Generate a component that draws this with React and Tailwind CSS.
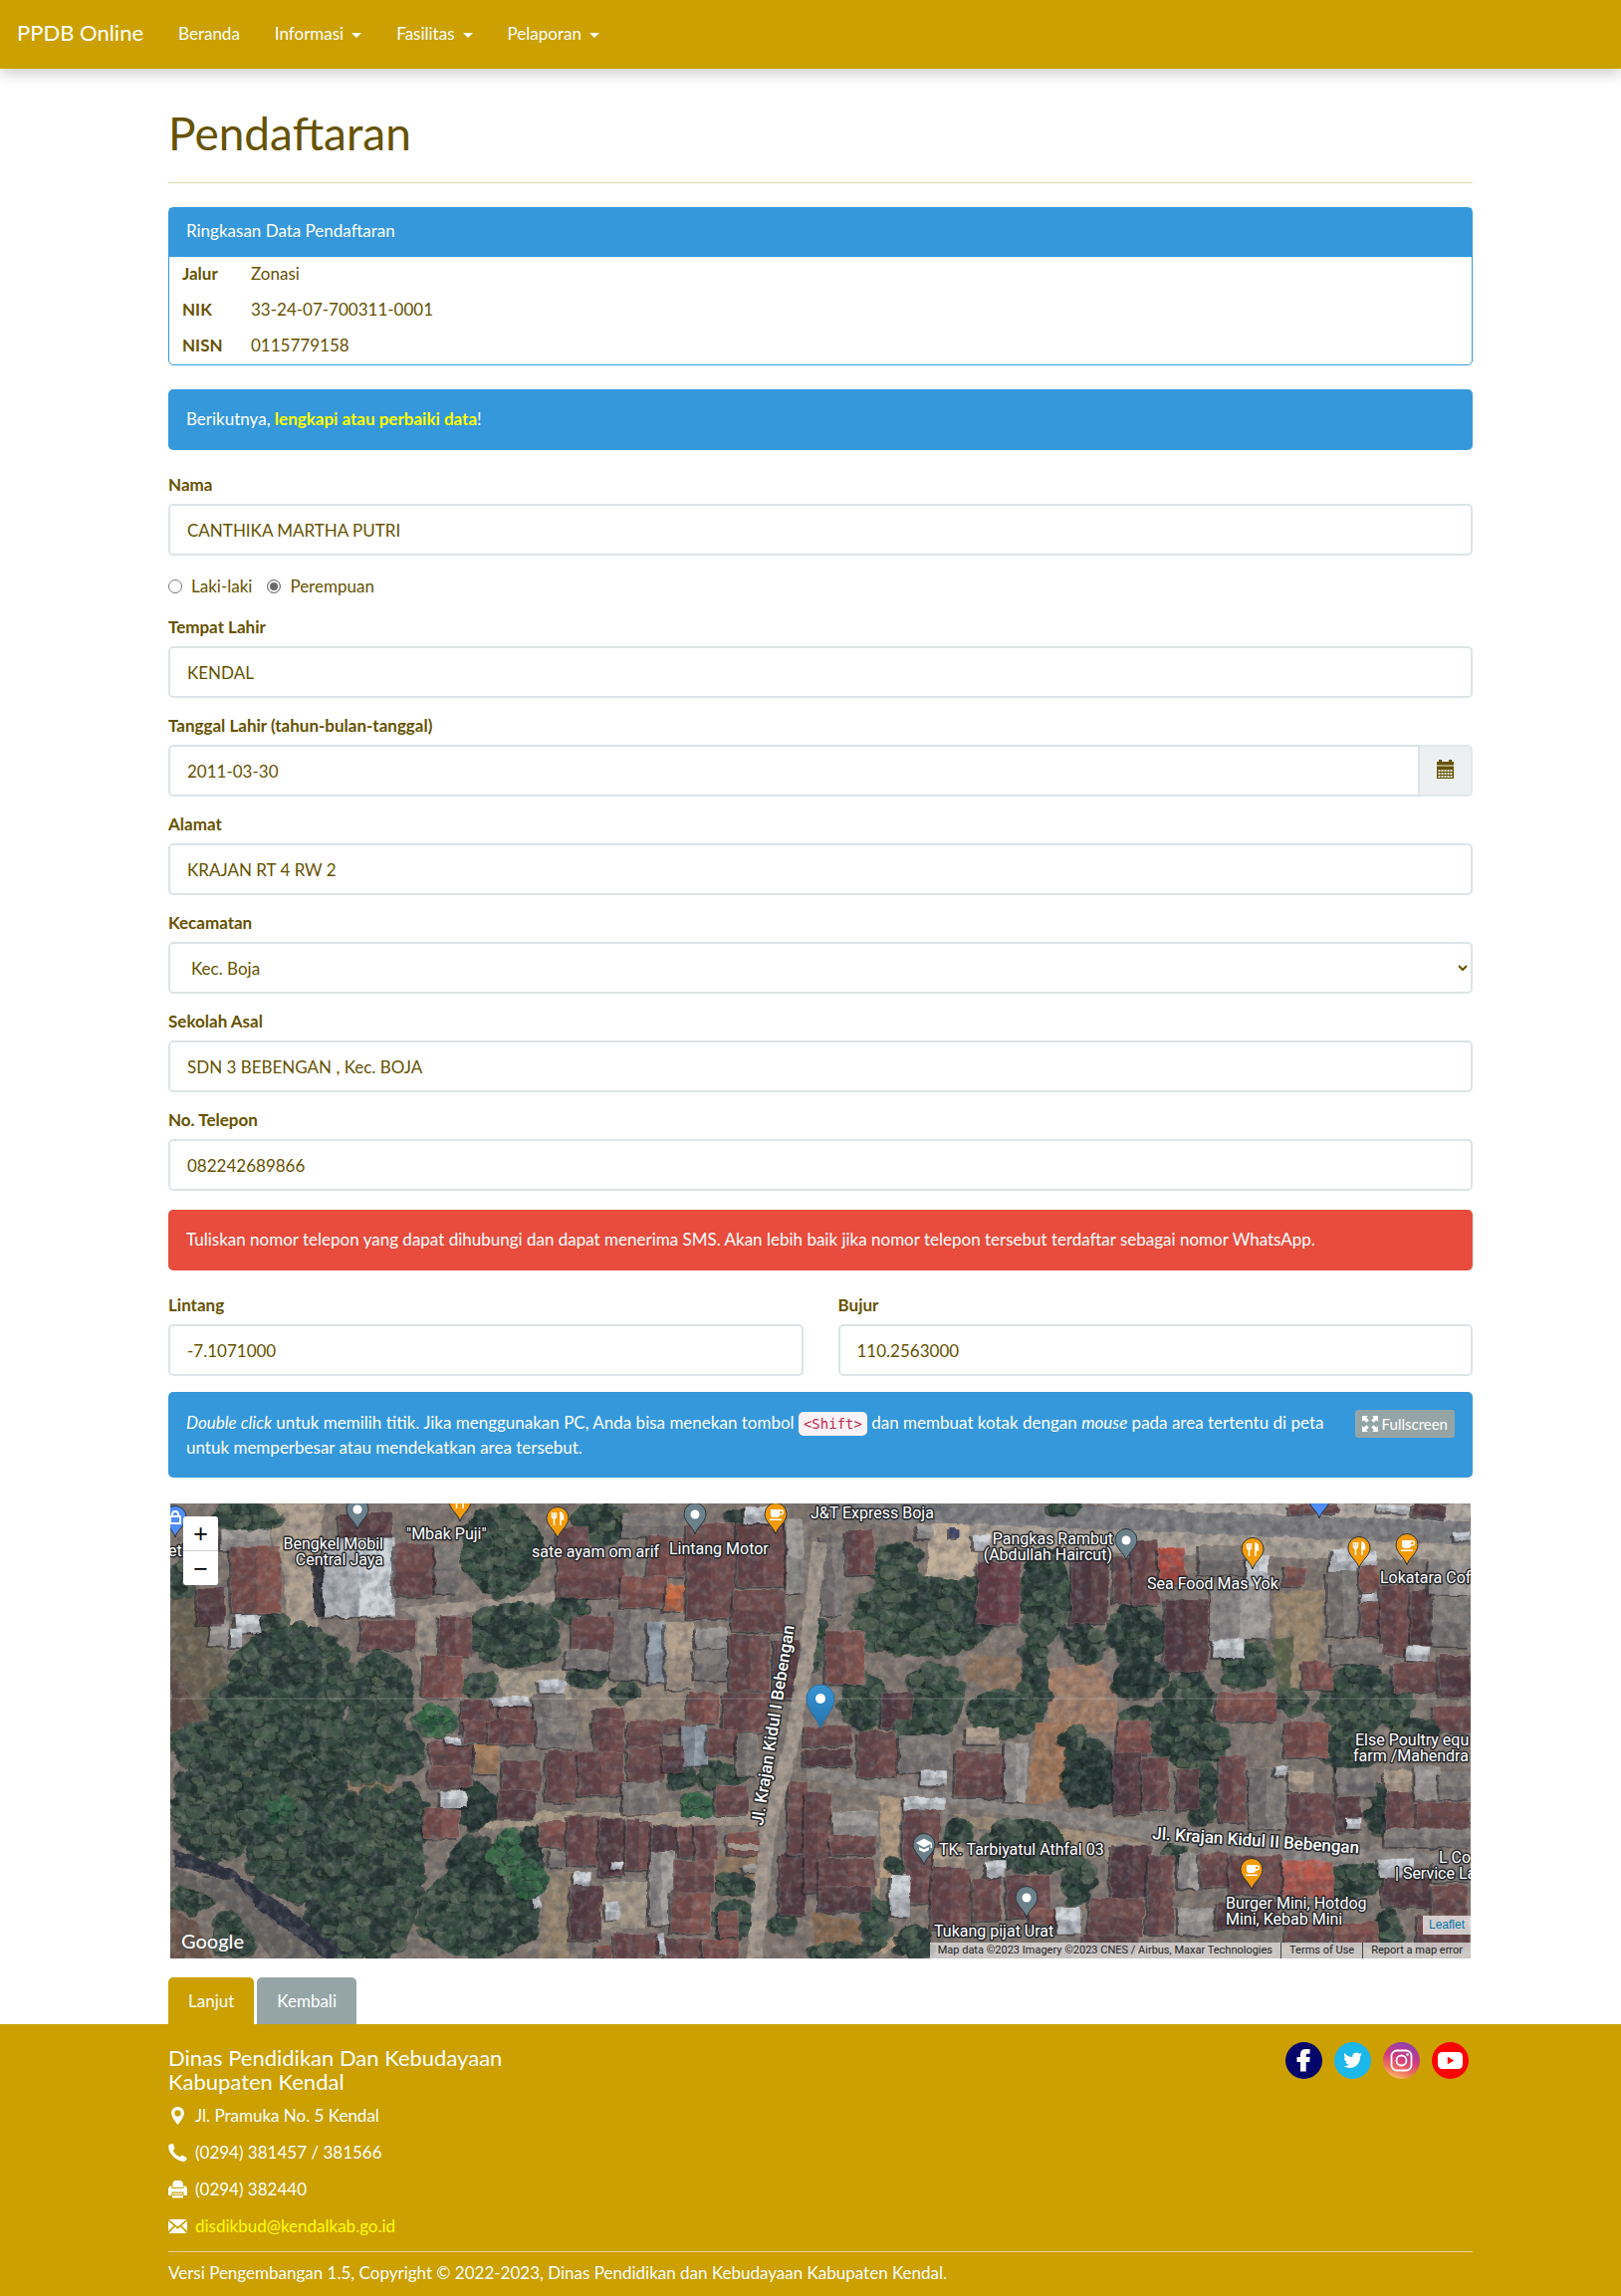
import React from "react";

/* ---------- small icons ---------- */
const CalendarIcon = () => (
  <svg width="17" height="19" viewBox="0 0 17 19" fill="currentColor" aria-hidden="true">
    <path d="M2 0h3v2h7V0h3v2h2v3.500H0V2h2z" />
    <path
      fillRule="evenodd"
      d="M0 6.500h17V19H0zM1.500 10v2h2v-2zM4.500 10v2h2v-2zM7.500 10v2h2v-2zM10.500 10v2h2v-2zM13.500 10v2h2v-2zM1.500 13v2h2v-2zM4.500 13v2h2v-2zM7.500 13v2h2v-2zM10.500 13v2h2v-2zM13.500 13v2h2v-2zM1.500 16v2h2v-2zM4.500 16v2h2v-2zM7.500 16v2h2v-2zM10.500 16v2h2v-2zM13.500 16v2h2v-2z"
    />
  </svg>
);
const ExpandIcon = () => (
  <svg width="16" height="16" viewBox="0 0 16 16" fill="currentColor" aria-hidden="true">
    <path d="M0 0h6L4.200 1.800 6.800 4.400 4.400 6.800 1.800 4.200 0 6zM16 0h-6l1.800 1.800-2.600 2.600 2.400 2.400 2.600-2.600L16 6zM0 16h6l-1.800-1.800 2.600-2.600-2.400-2.400-2.600 2.600L0 10zM16 16h-6l1.800-1.800-2.600-2.600 2.400-2.400 2.600 2.600L16 10z" />
  </svg>
);
const PinIcon = () => (
  <svg width="19" height="18" viewBox="0 0 19 18" fill="currentColor" aria-hidden="true">
    <path fillRule="evenodd" d="M9.500 0a6.400 6.400 0 0 1 6.400 6.400C15.900 10.500 9.500 18 9.500 18S3.100 10.500 3.100 6.400A6.400 6.400 0 0 1 9.500 0zm0 3.200a3.200 3.200 0 1 0 0 6.400 3.200 3.200 0 0 0 0-6.400z" />
  </svg>
);
const PhoneIcon = () => (
  <svg width="19" height="18" viewBox="0 0 19 18" fill="currentColor" aria-hidden="true">
    <path d="M1.500.8 4 0c.6-.1 1 .2 1.200.7l1.200 3.600c.1.500 0 .9-.4 1.200L4.700 6.800c1.200 2.700 3.500 5 6.800 6.500l1.700-1.400c.4-.3.900-.3 1.300-.1l3.700 2.200c.5.300.7.900.4 1.400L17.400 17c-.4.700-1 1-1.700 1C7.500 17.300 0 9.800.2 2.500c0-.8.500-1.400 1.300-1.700z" />
  </svg>
);
const PrinterIcon = () => (
  <svg width="19" height="18" viewBox="0 0 19 18" fill="currentColor" aria-hidden="true">
    <path d="M6.500 0h6l2.500 2.500V7H4.500V2z" />
    <path d="M1.500 5.500h2V8h12V5.500h2L19 8v7h-3.500v-3.500h-12V15H0V8z" />
    <path d="M4.500 12.700h10V14h-10zM4 15h11v2.500H4z" />
  </svg>
);
const MailIcon = () => (
  <svg width="19" height="14" viewBox="0 0 19 14" fill="currentColor" aria-hidden="true">
    <path d="M.6 0h17.800L9.500 7.600zM0 1.400 5.600 6.400 0 11.800zM19 1.400v10.400l-5.600-5.400zM6.700 7.400l2.800 2.300 2.800-2.300L18.600 14H.4z" />
  </svg>
);
const Caret = () => <span className="ml-2 inline-block border-x-[5px] border-t-[5px] border-x-transparent border-t-current align-middle" />;

/* ---------- satellite map ---------- */
const M = "#6f4b4c", D = "#593d42", R = "#83524e", G = "#827c79", L = "#a39e9b", W = "#d0d5da", T = "#b3a08c", B = "#96a2ae";

// Each sector is drawn in its own local units: roofs [x, y, w, h, colour, ridge], trees [x, y, w, h, count, tone]
const sectors = [
  {
    t: "translate(-21 -10) scale(.4209 .3333)",
    ground: [
      ["#6a614f", "50,240 110,280 170,470 190,560 150,720 50,720"],
      ["#5d4a43", "50,500 110,640 140,720 50,720"],
      ["#b0a08e", "300,31 420,31 400,240 400,400 330,410 320,240 290,110"],
      ["#a2968b", "600,345 800,320 1010,290 1010,320 820,350 640,380"],
      ["#2d3038", "385,180 415,210 430,370 395,370"],
      ["#9c8f84", "640,380 700,370 690,500 650,600 640,490"],
      ["#a79b88", "820,540 990,530 1010,620 860,640"],
      ["#938576", "1010,560 1290,590 1280,720 1040,720"],
    ],
    roofs: [
      [455, 60, 125, 100, D], [415, 135, 170, 236, W, "v"], [585, 150, 97, 160, M], [684, 150, 55, 150, G],
      [170, 110, 120, 60, L, "h"], [505, 380, 130, 92, M], [692, 370, 78, 120, M, "v"], [655, 490, 92, 125, R, "v"], [145, 380, 45, 80, L],
      [205, 365, 60, 55, W], [115, 285, 65, 110, D], [195, 160, 120, 200, R, "v"], [975, 100, 75, 90, M, "v"], [975, 190, 160, 125, M],
      [1130, 60, 150, 70, G], [1190, 130, 90, 120, R, "v"], [1125, 250, 110, 95, R], [1232, 275, 46, 80, "#c96a42"],
      [1285, 90, 115, 95, M], [1283, 180, 115, 195, M, "v"], [1403, 90, 118, 190, M, "v"], [1520, 80, 40, 220, L], [1420, 40, 70, 50, W],
      [1395, 290, 125, 125, M], [1100, 350, 94, 212, G, "v"], [1010, 370, 98, 100, M], [995, 470, 100, 60, G],
      [1190, 385, 42, 185, B], [1232, 390, 65, 200, T], [1305, 405, 75, 60, L], [1300, 470, 85, 90, G], [1385, 425, 95, 170, M, "v"], [1285, 600, 75, 95, R, "v"],
      [1370, 600, 110, 120, M, "v"], [745, 622, 90, 98, M, "v"], [835, 640, 85, 80, M], [920, 605, 75, 115, G, "v"], [820, 612, 90, 30, W],
      [930, 560, 62, 40, W], [1065, 645, 70, 75, M, "v"], [1145, 682, 150, 38, M], [195, 405, 26, 60, W], [1490, 440, 60, 180, D],
    ],
    trees: [[150, 31, 160, 85, 20], [745, 40, 195, 270, 55], [770, 330, 210, 195, 50], [190, 400, 300, 330, 90], [470, 480, 160, 240, 50], [960, 300, 85, 80, 12], [1020, 31, 120, 110, 20], [140, 580, 100, 100, 20], [640, 640, 90, 80, 14, 2], [760, 540, 60, 70, 9], [1010, 500, 70, 90, 8], [1110, 570, 55, 55, 6], [50, 210, 60, 100, 8], [265, 350, 60, 50, 6], [1390, 50, 50, 60, 6]],
  },
  {
    t: "translate(639 -10) scale(.4337 .3333)",
    ground: [
      ["#c1ae98", "290,90 400,85 390,290 270,300"],
      ["#aaa095", "380,80 860,110 1538,150 1538,200 900,190 380,160"],
      ["#7e7d80", "40,31 420,31 1538,85 1538,155 760,112 250,85 20,75"],
      ["#b3aaa3", "620,31 1538,31 1538,85 900,55"],
      ["#9a866c", "1080,300 1200,290 1190,480 1150,580 1100,600"],
      ["#a37e68", "560,530 680,510 720,600 720,720 560,720"],
      ["#8d735f", "370,490 500,490 540,560 440,600 370,560"],
      ["#5c6249", "1080,440 1130,430 1120,600 1090,600"],
    ],
    roofs: [
      [35, 125, 55, 240, G, "v"], [92, 110, 65, 135, M, "v"], [255, 90, 40, 45, L], [385, 125, 38, 45, W], [330, 105, 24, 30, "#3c4168"],
      [395, 205, 100, 190, "#6c3f4b", "v"], [45, 415, 90, 160, R, "v"], [615, 180, 85, 210, D, "v"], [712, 190, 40, 140, M, "v"], [755, 140, 60, 195, M, "v"],
      [815, 165, 62, 110, "#b74e42"], [910, 155, 110, 90, G], [1020, 190, 50, 90, W], [935, 280, 138, 160, L, "v"], [940, 440, 75, 55, W], [830, 320, 100, 215, D, "v"],
      [1105, 220, 50, 60, R], [1215, 170, 105, 65, W], [1207, 235, 72, 195, G, "v"], [1282, 220, 42, 75, R], [1283, 300, 42, 25, W], [1283, 330, 45, 100, M],
      [1330, 275, 68, 210, M, "v"], [1400, 290, 45, 170, D], [1440, 200, 98, 105, L, "v"], [1450, 310, 88, 150, G], [1390, 460, 50, 45, W],
      [1360, 510, 100, 90, M], [1465, 485, 73, 130, D], [1450, 640, 88, 80, M], [1150, 505, 70, 85, R, "v"], [1215, 450, 120, 65, G],
      [950, 600, 140, 85, R], [175, 600, 70, 105, D, "v"], [1320, 35, 80, 22, W], [1405, 31, 75, 40, D], [1120, 31, 110, 30, M], [1500, 118, 38, 22, W],
    ],
    trees: [[110, 250, 330, 240, 80], [150, 150, 110, 130, 22], [360, 255, 65, 50, 8], [500, 160, 110, 280, 40], [500, 420, 60, 290, 14], [600, 400, 90, 100, 18], [700, 340, 125, 170, 30], [710, 500, 120, 110, 26, 1], [830, 540, 110, 170, 28], [960, 450, 120, 130, 20], [1190, 520, 170, 200, 44], [1340, 600, 60, 120, 10], [80, 540, 110, 170, 22], [240, 520, 120, 200, 38], [370, 590, 160, 130, 22], [560, 31, 80, 24, 10], [0, 380, 40, 140, 6], [1090, 600, 60, 60, 8], [735, 640, 200, 80, 20]],
  },
  {
    t: "translate(-21 220) scale(.4209 .3333)",
    ground: [
      ["#6b5346", "50,560 110,600 150,710 50,710"],
      ["#94775c", "470,180 590,170 560,240 520,290"],
      ["#a89884", "800,270 1470,270 1470,310 800,320"],
      ["#93826c", "950,450 1010,450 1000,710 930,710"],
      ["#a59886", "1080,480 1200,480 1180,620 1070,620"],
      ["#8f765f", "1350,400 1450,400 1450,480 1350,480"],
    ],
    roofs: [
      [672, 55, 105, 75, M], [668, 130, 100, 65, M], [710, 42, 65, 24, W], [775, 65, 60, 90, "#a8805c"], [695, 205, 62, 50, W], [655, 260, 85, 90, R, "v"],
      [750, -10, 60, 70, M], [812, -10, 108, 75, M, "v"], [925, -10, 95, 85, G], [1062, -10, 72, 105, M, "v"], [1142, 10, 85, 60, M], [1142, 72, 85, 105, M], [1270, 10, 60, 120, B, "v"], [1332, 20, 70, 75, M],
      [1402, 35, 50, 125, G, "v"], [845, 115, 90, 90, M, "v"], [832, 205, 90, 85, D], [948, 85, 75, 155, M, "v"], [1025, 90, 108, 130, M, "v"], [1130, 180, 85, 95, G], [1225, 70, 50, 80, D],
      [1350, 190, 78, 90, M], [930, 300, 65, 75, R], [998, 280, 75, 150, M, "v"], [1075, 290, 60, 170, D, "v"], [1138, 290, 60, 155, M, "v"], [1200, 310, 60, 90, D, "v"], [1262, 310, 40, 95, M], [1303, 310, 52, 105, M, "v"],
      [1378, 330, 78, 70, R], [1252, 415, 95, 95, M], [1195, 390, 55, 220, L, "v"], [1245, 512, 95, 122, R, "v"], [1015, 450, 38, 55, W], [1100, 420, 28, 24, W], [1005, 490, 75, 165, D, "v"],
      [1090, 540, 30, 55, W], [1110, 635, 105, 75, M, "v"], [1230, 650, 90, 60, M, "v"], [1322, 650, 85, 60, R], [1360, 570, 45, 75, R], [1065, 670, 40, 40, R], [1505, 400, 63, 180, D], [1525, 180, 45, 220, M], [955, 385, 35, 50, G],
      [1215, 635, 14, 65, W], [1420, 430, 30, 22, L], [915, 525, 18, 35, W],
    ],
    trees: [[50, -10, 280, 150, 60], [60, 100, 200, 310, 80], [220, 60, 270, 480, 160], [330, -10, 330, 190, 80], [430, 200, 220, 510, 130], [380, 480, 200, 230, 60], [570, 190, 90, 180, 22], [640, 440, 290, 270, 60], [720, 350, 110, 140, 30, 1], [880, 320, 60, 200, 20, 1], [820, 330, 60, 120, 12, 2], [860, 420, 90, 110, 20, 2], [60, 480, 100, 90, 16], [160, 560, 90, 150, 22], [735, 180, 85, 140, 18, 1], [1265, 225, 70, 60, 14, 2], [1240, 130, 60, 70, 8], [1310, 130, 120, 60, 9], [1350, 460, 100, 60, 10], [1345, 530, 100, 120, 10], [1490, 570, 50, 70, 8], [290, 225, 50, 80, 10, 2]],
    over: [
      ["#2b2e3a", "60,385 190,440 330,560 470,700 420,712 290,590 170,470 60,430"],
      ["#67635f", "50,430 130,470 200,470 260,560 400,690 420,712 290,712 210,580 130,520 50,480"],
    ],
  },
  {
    t: "translate(639 220) scale(.4337 .3333)",
    ground: [
      ["#b49b80", "170,220 220,230 210,460 160,470 150,600 240,660 170,700"],
      ["#a07559", "530,0 640,0 630,130 590,230 510,250"],
      ["#a18d74", "330,270 760,350 800,390 650,410 400,320"],
      ["#86684f", "10,570 120,600 130,690 20,690"],
      ["#a39485", "640,340 800,370 790,420 700,420"],
    ],
    roofs: [
      [-5, 10, 110, 60, M], [-5, 80, 110, 50, D], [120, 25, 90, 140, M, "v"], [215, 40, 115, 110, G], [265, 145, 60, 45, W], [370, 15, 75, 50, T], [345, 90, 115, 135, M], [460, 60, 50, 180, L, "v"],
      [720, -5, 78, 100, R], [712, 90, 65, 185, D, "v"], [780, 105, 60, 155, M, "v"], [860, 140, 50, 125, D], [955, 100, 62, 200, M, "v"], [1025, 140, 80, 180, G, "v"], [1110, 0, 100, 105, R, "v"],
      [1085, 130, 30, 28, W], [1118, 150, 55, 60, T], [1115, 215, 108, 125, M, "v"], [1228, 135, 90, 90, G], [1230, 225, 55, 105, D], [1340, 145, 65, 65, T], [1342, 210, 65, 110, M, "v"], [1410, 130, 55, 105, L], [1466, 150, 72, 80, G], [1412, 240, 126, 85, M], [1340, 320, 198, 55, G],
      [-5, 210, 60, 300, M, "v"], [60, 270, 105, 75, L], [55, 340, 105, 60, M], [30, 410, 130, 85, M, "v"], [30, 495, 120, 75, D], [225, 225, 95, 38, W], [225, 265, 85, 280, M, "v"], [195, 460, 45, 125, W], [295, 380, 70, 60, T], [290, 440, 90, 185, M, "v"], [385, 470, 65, 130, M],
      [465, 460, 100, 130, M, "v"], [515, 560, 80, 50, R], [580, 555, 55, 80, W], [415, 415, 45, 50, W], [705, 370, 95, 160, D, "v"], [655, 530, 125, 120, M], [790, 400, 60, 240, M, "v"], [862, 395, 48, 105, L, "v"], [912, 390, 65, 105, M], [980, 400, 125, 115, M, "v"],
      [1105, 415, 115, 115, "#b95a4d"], [860, 560, 80, 80, L], [1325, 410, 80, 55, W], [1335, 465, 110, 90, D], [1450, 420, 90, 60, G], [1450, 490, 80, 90, M], [1110, 600, 110, 60, M], [1225, 600, 100, 70, R], [1415, 580, 120, 100, M], [950, 540, 140, 80, D], [640, 640, 130, 50, D], [1250, 290, 35, 30, W],
    ],
    trees: [[600, 60, 110, 200, 44, 1], [790, -5, 150, 130, 34], [885, 120, 60, 190, 18], [910, 0, 60, 120, 10], [590, 20, 60, 60, 8], [10, 670, 130, 40, 12], [420, 290, 180, 150, 34], [500, 380, 100, 70, 14], [590, 400, 70, 140, 18], [1200, 400, 130, 130, 30], [1200, 0, 110, 150, 24], [1310, 180, 30, 150, 8], [190, 410, 40, 50, 6], [130, 530, 60, 160, 12], [1315, 570, 60, 110, 10], [210, 620, 80, 80, 12], [320, 290, 60, 70, 6], [830, 360, 50, 50, 6], [1370, -5, 90, 60, 10], [200, -5, 140, 50, 14]],
    over: [["#8b8582", "0,125 200,180 450,240 700,285 950,330 1320,385 1568,400 1568,430 1200,430 900,380 700,330 330,245 0,170"]],
  },
];

const greens = [
  ["#31473d", "#3a5243", "#283b35", "#455a4b", "#22332f", "#505f50"],
  ["#1f2f2d", "#293c36", "#23332f", "#31463d"],
  ["#2c5c40", "#356c46", "#28533b", "#41734b"],
];

function makeRandom(seed) {
  let s = seed;
  return () => {
    s = (s * 16807) % 2147483647;
    return s / 2147483647;
  };
}

function Sector({ t, ground, roofs, trees, over = [], seed }) {
  const rnd = makeRandom(seed);
  // Tree crowns are scattered inside the ellipse of their grove
  const blobs = trees.flatMap(([x, y, w, h, n, tone = 0]) =>
    Array.from({ length: Math.round(n * 2.2) }, () => {
      const set = greens[tone];
      const a = rnd() * Math.PI * 2;
      const d = Math.sqrt(rnd()) * 0.5;
      return { x: x + w / 2 + Math.cos(a) * d * w, y: y + h / 2 + Math.sin(a) * d * h, r: 7 + rnd() * 15, c: set[Math.floor(rnd() * set.length)] };
    })
  );
  return (
    <g transform={t}>
      {ground.map(([c, p], i) => <polygon key={i} points={p} fill={c} />)}
      {trees.map(([x, y, w, h, n, tone = 0], i) => (
        <ellipse key={i} cx={x + w / 2} cy={y + h / 2} rx={w / 2} ry={h / 2} fill={greens[tone][0]} />
      ))}
      {blobs.map((b, i) => (
        <g key={i}>
          <ellipse cx={b.x - 3} cy={b.y + 4} rx={b.r} ry={b.r} fill="#18241f" opacity=".5" />
          <ellipse cx={b.x} cy={b.y} rx={b.r} ry={b.r} fill={b.c} opacity=".85" />
        </g>
      ))}
      {over.map(([c, p], i) => <polygon key={i} points={p} fill={c} />)}
      {roofs.map(([x, y, w, h, c, ridge], i) => {
        const k = ((i * 37) % 9) - 4;
        const p = (a, b) => `${x + a * w + k * (0.5 - b)},${y + b * h + k * (a - 0.5)}`;
        return (
          <g key={i}>
            <polygon points={`${p(0, 0)} ${p(1, 0)} ${p(1, 1)} ${p(0, 1)}`} transform="translate(-7 6)" fill="#1d1c24" opacity=".6" />
            <polygon points={`${p(0, 0)} ${p(1, 0)} ${p(1, 1)} ${p(0, 1)}`} fill={c} stroke="#cbbdb2" strokeOpacity=".3" strokeWidth="2" />
            {ridge === "v" ? (
              <polygon points={`${p(0, 0)} ${p(0.5, 0)} ${p(0.5, 1)} ${p(0, 1)}`} fill="#191420" opacity=".18" />
            ) : (
              <polygon points={`${p(0, 0.52)} ${p(1, 0.52)} ${p(1, 1)} ${p(0, 1)}`} fill="#191420" opacity=".15" />
            )}
          </g>
        );
      })}
    </g>
  );
}

const Fork = () => (
  <g stroke="#fff" fill="none" strokeWidth="1.500">
    <path d="M-5.500 -6v4q0 2 2 2t2-2v-4M-3.500 -6V7" />
    <path d="M3 7V-6q3 1 2.500 7H3" fill="#fff" />
  </g>
);
const Cup = () => (
  <g fill="#fff">
    <path d="M-5 -5h9v5q0 3-3 3h-3q-3 0-3-3z" />
    <path d="M4 -4h1.500q2 0 2 1.800T5.500 0H4" fill="none" stroke="#fff" strokeWidth="1.300" />
    <path d="M-6 4.500H6V6H-6z" />
  </g>
);
const glyphs = {
  fork: <Fork />,
  cup: <Cup />,
  dot: <circle r="4.500" fill="#fff" />,
  cap: <path d="M-8 -2 0 -6.500 8 -2V3H6.500V-1L0 2.500zM-5 2v3L0 7.500 5 5V2L0 4.500z" fill="#fff" />,
  bag: <path d="M-5 -1H5V6H-5zM-3 -1V-3a3 3 0 0 1 6 0V-1" fill="none" stroke="#fff" strokeWidth="1.800" />,
  none: null,
};
// [tip x, tip y, colour, glyph]
const pins = [
  [5, 34, "#4f8df5", "bag"], [188, 26, "#6b818c", "dot"], [291, 18, "#f39b0c", "fork"], [389, 35, "#f39b0c", "fork"],
  [527, 31, "#6b818c", "dot"], [608, 31, "#f39b0c", "cup"], [1154, 15, "#4f8df5", "none"], [960, 57, "#6b818c", "dot"],
  [1087, 66, "#f39b0c", "fork"], [1194, 65, "#f39b0c", "fork"], [1242, 62, "#f39b0c", "cup"], [757, 363, "#6b818c", "cap"],
  [860, 416, "#6b818c", "dot"], [1086, 388, "#f39b0c", "cup"],
];
// [x, baseline, text, anchor]
const labels = [
  [-2, 53, "eti", "start"], [214, 46, "Bengkel Mobil", "end"], [214, 62, "Central Jaya", "end"], [237, 36, "\"Mbak Puji\"", "start"],
  [363, 54, "sate ayam om arif", "start"], [501, 51, "Lintang Motor", "start"], [643, 15, "J&T Express Boja", "start"],
  [947, 41, "Pangkas Rambut", "end"], [946, 57, "(Abdullah Haircut)", "end"], [981, 86, "Sea Food Mas Yok", "start"],
  [1215, 80, "Lokatara Cof", "start"], [1190, 243, "Else Poultry equ", "start"], [1188, 259, "farm /Mahendra", "start"],
  [772, 353, "TK. Tarbiyatul Athfal 03", "start"], [767, 435, "Tukang pijat Urat", "start"], [1060, 407, "Burger Mini, Hotdog", "start"],
  [1060, 423, "Mini, Kebab Mini", "start"], [1274, 361, "L Co", "start"], [1230, 377, "| Service La", "start"],
];

function SatelliteMap() {
  return (
    <svg className="block h-full w-full" viewBox="0 0 1306 457" preserveAspectRatio="xMidYMid slice" role="img" aria-label="Peta satelit">
      <defs>
        <filter id="grain" x="0" y="0" width="100%" height="100%">
          <feTurbulence type="fractalNoise" baseFrequency=".1" numOctaves="4" seed="4" />
          <feColorMatrix values="0 0 0 0 .06  0 0 0 0 .07  0 0 0 0 .09  1.600 0 0 0 -.6" />
        </filter>
        <filter id="glint" x="0" y="0" width="100%" height="100%">
          <feTurbulence type="fractalNoise" baseFrequency=".12" numOctaves="4" seed="11" />
          <feColorMatrix values="0 0 0 0 .8  0 0 0 0 .76  0 0 0 0 .7  0 1.600 0 0 -.7" />
        </filter>
        <filter id="ragged" x="0" y="0" width="100%" height="100%">
          <feTurbulence type="fractalNoise" baseFrequency=".07" numOctaves="3" seed="7" />
          <feDisplacementMap in="SourceGraphic" scale="6" xChannelSelector="R" yChannelSelector="G" />
          <feGaussianBlur stdDeviation=".7" />
        </filter>
        <linearGradient id="marker" x1="0" y1="0" x2="0" y2="1">
          <stop offset="0" stopColor="#3a95d2" />
          <stop offset="1" stopColor="#2272ad" />
        </linearGradient>
      </defs>
      <g filter="url(#ragged)">
        <rect x="-10" y="-10" width="1326" height="480" fill="#80756e" />
        {sectors.map((s, i) => <Sector key={i} {...s} seed={101 + i * 977} />)}
        <path d="M652 40 640 150 624 240 600 330 586 462" fill="none" stroke="#a3978c" strokeWidth="15" />
        <path d="M560 345H600M470 318H606" fill="none" stroke="#a3978c" strokeWidth="6" />
      </g>
      <rect width="1306" height="457" filter="url(#grain)" opacity=".6" />
      <rect width="1306" height="457" filter="url(#glint)" opacity=".3" />
      <path d="M0 196H1306" stroke="#d8d8d8" strokeOpacity=".3" />

      {pins.map(([x, y, c, g], i) => (
        <g key={i} transform={`translate(${x} ${y})`}>
          <path d="M0 0C-2 -8-11 -12-11 -20.500A11 11 0 0 1 11 -20.500C11 -12 2 -8 0 0z" fill={c} stroke="#2b3238" />
          <g transform="translate(0 -20)">{glyphs[g]}</g>
        </g>
      ))}
      <g fill="#fff" stroke="#24262a" strokeWidth="3" strokeLinejoin="round" paintOrder="stroke" fontFamily="Roboto, sans-serif" fontSize="16">
        {labels.map(([x, y, s, a]) => <text key={s} x={x} y={y} textAnchor={a}>{s}</text>)}
        <text transform="translate(595 324) rotate(-81)" fontWeight="500" fontSize="17">Jl. Krajan Kidul I Bebengan</text>
        <text transform="translate(986 337) rotate(4)" fontWeight="500" fontSize="17">Jl. Krajan Kidul II Bebengan</text>
      </g>
      <text x="11" y="447" fill="#fff" stroke="#444" strokeWidth="1.500" paintOrder="stroke" fontFamily="Lato, sans-serif" fontSize="20" fontWeight="500">Google</text>
      <g transform="translate(653 226)">
        <path d="M0 0C-3 -11-14 -18-14 -30A14 14 0 0 1 14 -30C14 -18 3 -11 0 0z" fill="url(#marker)" stroke="#2d6f9f" />
        <circle cy="-30" r="5" fill="#fff" />
      </g>
    </svg>
  );
}

/* ---------- form pieces ---------- */
const inputClass = "block h-[52px] w-full rounded-[5px] border-2 border-[#dce4e7] bg-white px-[17px] text-[17px] text-[#665200] outline-none";

function Field({ id, label, children }) {
  return (
    <div className="mb-4">
      <label htmlFor={id} className="mb-[7px] block leading-6 font-bold">{label}</label>
      {children}
    </div>
  );
}
const TextField = ({ id, label, value }) => (
  <Field id={id} label={label}>
    <input id={id} type="text" defaultValue={value} className={inputClass} />
  </Field>
);

const radioClass = "m-0 h-[14px] w-[14px] appearance-none rounded-full border border-[#767676] bg-white checked:bg-[#6b6b6b] checked:shadow-[inset_0_0_0_2px_white]";

const contacts = [
  [PinIcon, "Jl. Pramuka No. 5 Kendal"],
  [PhoneIcon, "(0294) 381457 / 381566"],
  [PrinterIcon, "(0294) 382440"],
];

export default function App() {
  return (
    <div className="min-h-screen bg-white font-[Lato,sans-serif] text-[17px] leading-[25px] text-[#665200]">
      <nav className="relative flex h-[69px] items-center gap-[35px] bg-[#cba000] px-[17px] pb-0.5 text-white shadow-[0_6px_12px_rgba(0,0,0,0.175)]">
        <a href="#" className="pb-0.5 text-[22px]">PPDB Online</a>
        <a href="#">Beranda</a>
        {["Informasi", "Fasilitas", "Pelaporan"].map((m) => (
          <button key={m} type="button">{m}<Caret /></button>
        ))}
      </nav>

      <main className="pr-4 pl-9">
        <div className="mx-auto max-w-[1310px] pt-10">
          <h1 className="border-b border-[#dcd7a3] pb-6 text-[46px] leading-[50px]">Pendaftaran</h1>

          <section className="mt-6 rounded-[5px] border border-[#3498db]">
            <h2 className="bg-[#3498db] px-[17px] pt-[10px] pb-[14px] text-white">Ringkasan Data Pendaftaran</h2>
            <table className="border-collapse text-left">
              <tbody>
                {[["Jalur", "Zonasi"], ["NIK", "33-24-07-700311-0001"], ["NISN", "0115779158"]].map(([k, v]) => (
                  <tr key={k} className="h-9">
                    <th scope="row" className="w-[70px] pb-[3px] pl-[13px] font-bold">{k}</th>
                    <td className="pb-[3px] pl-3">{v}</td>
                  </tr>
                ))}
              </tbody>
            </table>
          </section>

          <div className="mt-6 mb-[23px] rounded-[5px] bg-[#3498db] px-[18px] pt-[17px] pb-[19px] text-white">
            Berikutnya, <b className="text-[#ffff00]">lengkapi atau perbaiki data</b>!
          </div>

          <form onSubmit={(e) => e.preventDefault()}>
            <TextField id="nama" label="Nama" value="CANTHIKA MARTHA PUTRI" />
            <div className="mb-4 flex items-center gap-[15px] pt-0.5 pb-px">
              <label className="flex items-center gap-[9px]"><input type="radio" name="jk" className={radioClass} />Laki-laki</label>
              <label className="flex items-center gap-[9px]"><input type="radio" name="jk" defaultChecked className={radioClass} />Perempuan</label>
            </div>
            <TextField id="tempat" label="Tempat Lahir" value="KENDAL" />
            <Field id="tanggal" label="Tanggal Lahir (tahun-bulan-tanggal)">
              <div className="flex">
                <input id="tanggal" type="text" defaultValue="2011-03-30" className="block h-[52px] min-w-0 flex-1 rounded-l-[5px] border-2 border-[#dce4e7] bg-white px-[17px] outline-none" />
                <button type="button" aria-label="Pilih tanggal" className="flex w-[53px] items-center justify-center rounded-r-[5px] border-2 border-l-0 border-[#e2e9eb] bg-[#ecf0f1] pb-1"><CalendarIcon /></button>
              </div>
            </Field>
            <TextField id="alamat" label="Alamat" value="KRAJAN RT 4 RW 2" />
            <Field id="kecamatan" label="Kecamatan">
              <select id="kecamatan" defaultValue="boja" className="block h-[52px] w-full rounded-[5px] border-2 border-[#dce4e7] bg-white px-[17px] outline-none">
                <option value="boja">Kec. Boja</option>
              </select>
            </Field>
            <TextField id="sekolah" label="Sekolah Asal" value="SDN 3 BEBENGAN , Kec. BOJA" />
            <TextField id="telepon" label="No. Telepon" value="082242689866" />

            <div className="mt-[19px] mb-[23px] rounded-[5px] bg-[#e74c3c] px-[18px] pt-[17px] pb-[19px] text-white">
              Tuliskan nomor telepon yang dapat dihubungi dan dapat menerima SMS. Akan lebih baik jika nomor telepon tersebut terdaftar sebagai nomor WhatsApp.
            </div>

            <div className="grid grid-cols-2 gap-[35px]">
              <TextField id="lintang" label="Lintang" value="-7.1071000" />
              <TextField id="bujur" label="Bujur" value="110.2563000" />
            </div>

            <div className="flex items-start gap-[18px] rounded-[5px] bg-[#3498db] p-[18px] text-white">
              <p className="flex-1">
                <i>Double click</i> untuk memilih titik. Jika menggunakan PC, Anda bisa menekan tombol{" "}
                <code className="rounded-[5px] bg-[#f9f2f4] px-[5px] py-1 font-['DejaVu_Sans_Mono',monospace] text-[14px] leading-none text-[#c7254e]">&lt;Shift&gt;</code>{" "}
                dan membuat kotak dengan <i>mouse</i> pada area tertentu di peta untuk memperbesar atau mendekatkan area tersebut.
              </p>
              <button type="button" className="flex h-7 items-center gap-1 rounded-[3px] bg-[#95a5a6] px-[7px] text-[15px]"><ExpandIcon />Fullscreen</button>
            </div>

            <div className="relative mx-0.5 mt-[26px] h-[457px] overflow-hidden">
              <SatelliteMap />
              <div className="absolute top-[13px] left-[13px] w-[35px] rounded-[3px] bg-white text-center font-['Liberation_Sans',sans-serif] text-[25px] leading-[34px] text-black">
                <button type="button" aria-label="Perbesar" className="block h-[35px] w-full border-b border-[#ccc]">+</button>
                <button type="button" aria-label="Perkecil" className="block h-[34px] w-full">−</button>
              </div>
              <a href="#" className="absolute right-0 bottom-6 bg-white/70 px-1.5 font-['Liberation_Sans',sans-serif] text-[12px] leading-[19px] text-[#0078a8]">Leaflet</a>
              <div className="absolute right-0 bottom-0 flex bg-[#e6e3e1]/75 font-[Roboto,sans-serif] text-[11px] leading-4 text-[#222]">
                <span className="px-2">Map data ©2023 Imagery ©2023 CNES / Airbus, Maxar Technologies</span>
                <a href="#" className="border-l border-[#444] px-2">Terms of Use</a>
                <a href="#" className="border-l border-[#444] px-2">Report a map error</a>
              </div>
            </div>

            <div className="mt-[19px] flex gap-[3px] text-white">
              <button type="submit" className="h-[47px] rounded-t-[5px] bg-[#cba000] px-5">Lanjut</button>
              <button type="button" className="h-[47px] rounded-t-[5px] bg-[#95a5a6] px-5">Kembali</button>
            </div>
          </form>
        </div>
      </main>

      <footer className="bg-[#cba000] pr-4 pb-[11px] pl-9 text-white">
        <div className="mx-auto max-w-[1310px]">
          <div className="flex items-start justify-between pt-[22px]">
            <div>
              <h2 className="text-[22px] leading-6">Dinas Pendidikan Dan Kebudayaan<br />Kabupaten Kendal</h2>
              <address className="mt-[9px] flex flex-col gap-3 not-italic">
                {contacts.map(([Icon, text]) => (
                  <p key={text} className="flex items-center gap-2"><Icon />{text}</p>
                ))}
                <p className="flex items-center gap-2"><MailIcon /><a href="mailto:disdikbud@kendalkab.go.id" className="text-[#ffff00]">disdikbud@kendalkab.go.id</a></p>
              </address>
            </div>
            <div className="-mt-1 mr-1 flex gap-3">
              <a href="#" aria-label="Facebook">
                <svg width="37" height="37" viewBox="0 0 37 37"><circle cx="18.500" cy="18.500" r="18.500" fill="#02066a" /><path d="M15 29.500V20H11.500v-5H15v-2.700c0-3.600 1.900-5.300 5.400-5.300h4.100v4.800h-2.200c-1.200 0-1.600.5-1.600 1.600V15h4l-.5 5h-3.500v9.500z" fill="#fff" /></svg>
              </a>
              <a href="#" aria-label="Twitter">
                <svg width="37" height="37" viewBox="0 0 37 37"><circle cx="18.500" cy="18.500" r="18.500" fill="#1cb7eb" /><path d="M28 12.300c-.7.300-1.400.5-2.200.6.800-.5 1.400-1.200 1.700-2.100-.7.400-1.600.8-2.500.9a3.900 3.900 0 0 0-6.600 3.500c-3.200-.2-6.100-1.700-8-4.100-1 1.800-.5 4 1.200 5.200-.6 0-1.200-.2-1.700-.5 0 1.900 1.300 3.500 3.100 3.900-.6.100-1.200.2-1.700.1.500 1.500 1.900 2.600 3.600 2.700a7.900 7.900 0 0 1-5.700 1.600c7.500 4.700 16.900.3 16.900-9.300 0-.2 0-.4 0-.5.700-.6 1.400-1.200 1.900-2z" fill="#fff" /></svg>
              </a>
              <a href="#" aria-label="Instagram">
                <svg width="37" height="37" viewBox="0 0 37 37">
                  <defs>
                    <linearGradient id="ig" x1=".65" y1="0" x2=".3" y2="1">
                      <stop offset="0" stopColor="#8b3fb5" /><stop offset=".45" stopColor="#d23b7c" /><stop offset=".75" stopColor="#ee7360" /><stop offset="1" stopColor="#fcc467" />
                    </linearGradient>
                  </defs>
                  <circle cx="18.500" cy="18.500" r="18.500" fill="url(#ig)" />
                  <rect x="8.500" y="8.500" width="20" height="20" rx="5.500" fill="none" stroke="#fff" strokeWidth="1.800" />
                  <circle cx="18.500" cy="18.500" r="5" fill="none" stroke="#fff" strokeWidth="1.800" />
                  <circle cx="24.500" cy="12.500" r="1.300" fill="#fff" />
                </svg>
              </a>
              <a href="#" aria-label="YouTube">
                <svg width="37" height="37" viewBox="0 0 37 37"><circle cx="18.500" cy="18.500" r="18.500" fill="#fa0505" /><rect x="6" y="10" width="25" height="17" rx="4.500" fill="#fff" /><path d="M15.800 14.800v7.400l6.600-3.700z" fill="#fa0505" /></svg>
              </a>
            </div>
          </div>
          <p className="mt-[13px] border-t border-[#e8d48f] pt-2">Versi Pengembangan 1.5, Copyright © 2022-2023, Dinas Pendidikan dan Kebudayaan Kabupaten Kendal.</p>
        </div>
      </footer>
    </div>
  );
}
